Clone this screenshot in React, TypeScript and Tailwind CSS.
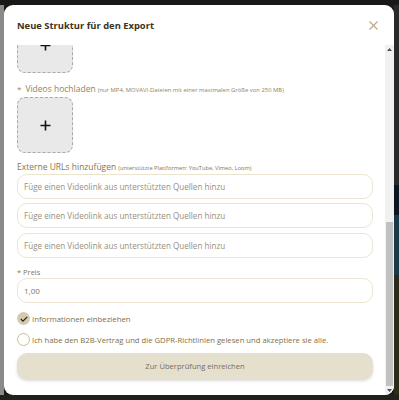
import React from "react";

const font = { fontFamily: '"Open Sans", "Noto Sans", sans-serif' };

function UploadBox() {
  return (
    <div className="flex h-[56px] w-[56px] items-center justify-center rounded-[8px] border border-dashed border-[#a9a9a9] bg-[#e9e9e9]">
      <svg width="11" height="11" viewBox="0 0 11 11">
        <path d="M5.5 0.5V10.5M0.5 5.5H10.5" stroke="#111" strokeWidth="1.6" />
      </svg>
    </div>
  );
}

function UrlInput({ placeholder }: { placeholder: string }) {
  return (
    <div className="flex h-[25px] items-center rounded-[10px] border border-[#ebe5cf] bg-white px-[6px] text-[8.1px] leading-[12px] text-[#978f7c]">
      {placeholder}
    </div>
  );
}

export default function App() {
  const ph = "Füge einen Videolink aus unterstützten Quellen hinzu";
  return (
    <div className="flex h-[400px] w-[399px] flex-col bg-[#1c1a18]" style={font}>
      <div className="h-[5px] bg-[#1a1816]" />
      <div className="flex h-[390px]">
        <div className="w-[4px] bg-[#8a8a88]" />
        <div className="flex w-[390px] flex-col overflow-hidden rounded-[9px] bg-white">
          <div className="flex h-[40px] shrink-0 items-center justify-between pl-[13px] pr-[16px] pt-[1px]">
            <div className="text-[9.4px] font-bold leading-[14px] text-[#3a3322]">Neue Struktur für den Export</div>
            <svg width="9" height="9" viewBox="0 0 9 9">
              <path d="M0.5 0.5L8.5 8.5M8.5 0.5L0.5 8.5" stroke="#b7a983" strokeWidth="1.1" />
            </svg>
          </div>
          <div className="flex min-h-0 flex-1">
            <div className="flex-1 overflow-hidden pl-[13px] pr-[12px]">
              <div className="-mt-[28px] flex flex-col">
                <UploadBox />
                <div className="mt-[10px] flex h-[12px] items-baseline leading-[12px] text-[#94825a]">
                  <span className="mr-[4px] text-[8px]">*</span>
                  <span className="text-[8.5px]">Videos hochladen</span>
                  <span className="ml-[2px] text-[5.9px]">(nur MP4, MOVAVI-Dateien mit einer maximalen Größe von 250 MB)</span>
                </div>
                <div className="mt-[2px]">
                  <UploadBox />
                </div>
                <div className="mt-[8px] flex h-[12px] items-baseline leading-[12px] text-[#877650]">
                  <span className="text-[8.5px]">Externe URLs hinzufügen</span>
                  <span className="ml-[2px] text-[5.7px]">(unterstützte Plattformen: YouTube, Vimeo, Loom)</span>
                </div>
                <div className="mt-[1px] flex flex-col gap-[4px]">
                  <UrlInput placeholder={ph} />
                  <UrlInput placeholder={ph} />
                  <div className="mt-[1px]">
                    <UrlInput placeholder={ph} />
                  </div>
                </div>
                <div className="mt-[8px] h-[12px] text-[7.5px] leading-[12px] text-[#877650]">* Preis</div>
                <div className="flex h-[25px] items-center rounded-[10px] border border-[#ebe5cf] bg-white px-[6px] text-[8px] leading-[12px] text-[#7d7460]">
                  1,00
                </div>
                <div className="mt-[9px] flex h-[13px] items-center gap-[2px]">
                  <div className="flex h-[13px] w-[13px] items-center justify-center rounded-full bg-[#d4ccb0]">
                    <svg width="8" height="6" viewBox="0 0 8 6">
                      <path d="M0.8 3L3 5.1L7.2 0.8" stroke="#222" strokeWidth="1.2" fill="none" />
                    </svg>
                  </div>
                  <span className="text-[7.8px] leading-[12px] text-[#7f6f4a]">Informationen einbeziehen</span>
                </div>
                <div className="mt-[8px] flex h-[13px] items-center gap-[2px]">
                  <div className="h-[13px] w-[13px] rounded-full border border-[#c9bd98] bg-white" />
                  <span className="text-[7.7px] leading-[12px] text-[#7f6f4a]">
                    Ich habe den B2B-Vertrag und die GDPR-Richtlinien gelesen und akzeptiere sie alle.
                  </span>
                </div>
                <div className="mt-[7px] flex h-[26px] items-center justify-center rounded-[10px] bg-[#e5e0cd] text-[7.6px] leading-[12px] text-[#736d61] shadow-[0_2px_3px_rgba(0,0,0,0.15)]">
                  Zur Überprüfung einreichen
                </div>
              </div>
            </div>
            <div className="flex w-[9px] flex-col bg-[#f1f1f1]">
              <div className="flex h-[9px] items-center justify-center">
                <svg width="5" height="3" viewBox="0 0 5 3"><path d="M0 3L2.5 0L5 3Z" fill="#505050" /></svg>
              </div>
              <div className="h-[168px]" />
              <div className="mx-[1px] flex-1 bg-[#c1c1c1]" />
              <div className="flex h-[9px] items-center justify-center">
                <svg width="5" height="3" viewBox="0 0 5 3"><path d="M0 0L2.5 3L5 0Z" fill="#505050" /></svg>
              </div>
            </div>
          </div>
        </div>
        <div className="flex flex-1 flex-col bg-[#1f2428]">
          <div className="h-[180px] bg-[#2a2a2a]" />
          <div className="h-[30px] bg-[#0d1520]" />
          <div className="h-[60px] bg-[#1b3a48]" />
          <div className="flex-1 bg-[#2e2a1a]" />
        </div>
      </div>
      <div className="flex-1 bg-[#22201c]" />
    </div>
  );
}
